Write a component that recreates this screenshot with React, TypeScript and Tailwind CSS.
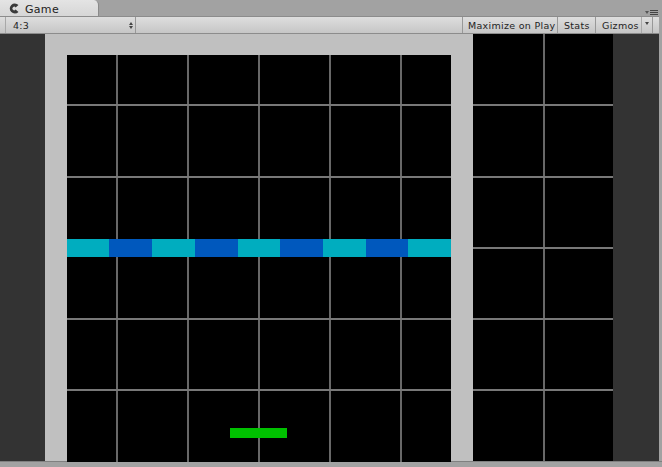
const FONT = { fontFamily: '"DejaVu Sans", sans-serif' };
const V_MAIN = [50, 121, 192, 263, 334];
const H_MAIN = [50, 122, 264, 335];
const BRICKS: [number, string][] = [
  [42, "#00adbf"], [43, "#0058bd"], [43, "#00adbf"], [43, "#0058bd"], [42, "#00adbf"],
  [43, "#0058bd"], [43, "#00adbf"], [42, "#0058bd"], [43, "#00adbf"],
];
const H_SIDE = [50, 122, 193, 264, 335];

function VLine({ x }: { x: number }) {
  return <div className="absolute top-0 bottom-0 w-[2px] bg-[#686868]" style={{ left: x - 1 }} />;
}
function HLine({ y }: { y: number }) {
  return <div className="absolute left-0 right-0 h-[2px] bg-[#787878]" style={{ top: y - 1 }} />;
}

export default function App() {
  return (
    <div className="w-[662px] h-[467px] bg-[#a2a2a2] flex flex-col overflow-hidden">
      <div className="h-[16px] shrink-0 flex items-end relative">
        <div className="w-[99px] h-[16px] bg-gradient-to-b from-[#e4e4e4] to-[#d6d6d6] rounded-tr-[5px] border-r border-[#8a8a8a] flex items-center pl-[9px] pt-[3px] gap-[5px]">
          <svg width="11" height="11" viewBox="0 0 10 10" className="-mt-[3px]">
            <path d="M8.6 1.8 A4.6 4.6 0 1 0 8.6 8.2 L6 6 A1.6 1.6 0 1 1 6 4 Z" fill="#3a3a3a" />
          </svg>
          <span className="text-[11px] text-[#222] tracking-[0.3px] leading-none" style={FONT}>Game</span>
        </div>
        <div className="absolute right-[4px] top-[10px] flex items-center gap-[1px]">
          <div className="w-0 h-0 border-l-[2.5px] border-r-[2.5px] border-t-[3px] border-l-transparent border-r-transparent border-t-[#555]" />
          <div className="flex flex-col gap-[1px]">
            <div className="w-[8px] h-[1px] bg-[#444]" />
            <div className="w-[8px] h-[1px] bg-[#444]" />
            <div className="w-[8px] h-[1px] bg-[#444]" />
          </div>
        </div>
      </div>

      <div className="h-[18px] shrink-0 w-[659px] bg-gradient-to-b from-[#dedede] to-[#c6c6c6] border-t border-b border-[#8c8c8c] flex items-stretch text-[9.5px] text-[#1e1e1e] tracking-[0.3px] leading-none" style={FONT}>
        <div className="w-[6px] border-r border-[#a8a8a8]" />
        <div className="w-[130px] border-r border-[#989898] flex items-center justify-between pl-[7px] pr-[2px] pt-[1px]">
          <span>4:3</span>
          <span className="flex flex-col gap-[1px]">
            <span className="w-0 h-0 border-l-[2px] border-r-[2px] border-b-[3px] border-l-transparent border-r-transparent border-b-[#444]" />
            <span className="w-0 h-0 border-l-[2px] border-r-[2px] border-t-[3px] border-l-transparent border-r-transparent border-t-[#444]" />
          </span>
        </div>
        <div className="w-[327px] border-r border-[#989898]" />
        <div className="w-[95px] border-r border-[#989898] flex items-center pl-[5px] whitespace-nowrap pt-[1px]">Maximize on Play</div>
        <div className="w-[38px] border-r border-[#989898] flex items-center pl-[6px] pt-[1px]">Stats</div>
        <div className="w-[57px] border-r border-[#989898] flex items-center pl-[6px] pt-[1px] relative whitespace-nowrap">
          Gizmos
          <span className="absolute right-0 top-0 bottom-0 w-[11px] border-l border-[#a8a8a8] flex pt-[5px] justify-center">
            <span className="w-0 h-0 border-l-[2.5px] border-r-[2.5px] border-t-[3px] border-l-transparent border-r-transparent border-t-[#444]" />
          </span>
        </div>
      </div>

      <div className="flex-1 flex min-h-0">
        <div className="w-[45px] bg-[#333333]" />
        <div className="w-[428px] bg-[#c0c0c0] pt-[21px] pl-[22px]">
          <div className="w-[384px] h-[407px] bg-black relative">
            {V_MAIN.map((x) => <VLine key={x} x={x} />)}
            {H_MAIN.map((y) => <HLine key={y} y={y} />)}
            <div className="absolute left-0 right-0 top-[184px] h-[18px] flex">
              {BRICKS.map(([w, c], i) => (
                <div key={i} className="h-full" style={{ width: w, backgroundColor: c }} />
              ))}
            </div>
            <div className="absolute left-[163px] top-[373px] w-[57px] h-[10px] bg-[#00c000]" />
          </div>
        </div>
        <div className="w-[140px] bg-black relative">
          <VLine x={71} />
          {H_SIDE.map((y) => <HLine key={y} y={y + 21} />)}
        </div>
        <div className="w-[46px] bg-[#333333]" />
        <div className="flex-1 bg-[#a2a2a2]" />
      </div>
      <div className="h-[6px] shrink-0 bg-[#a2a2a2] border-t border-[#808080]" />
    </div>
  );
}
